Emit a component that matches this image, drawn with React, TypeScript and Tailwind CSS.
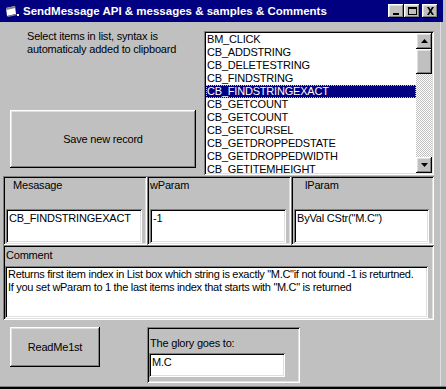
import React from "react";

const raised =
  "shadow-[inset_-1px_-1px_0_#000000,inset_1px_1px_0_#ffffff,inset_-2px_-2px_0_#808080,inset_2px_2px_0_#dfdfdf]";
const sunken =
  "shadow-[inset_1px_1px_0_#808080,inset_-1px_-1px_0_#ffffff,inset_2px_2px_0_#000000,inset_-2px_-2px_0_#dfdfdf]";
const frame =
  "shadow-[inset_1px_1px_0_#808080,inset_-1px_-1px_0_#ffffff,inset_2px_2px_0_#000000,inset_-2px_-2px_0_#dfdfdf]";

const messages = [
  "BM_CLICK",
  "CB_ADDSTRING",
  "CB_DELETESTRING",
  "CB_FINDSTRING",
  "CB_FINDSTRINGEXACT",
  "CB_GETCOUNT",
  "CB_GETCOUNT",
  "CB_GETCURSEL",
  "CB_GETDROPPEDSTATE",
  "CB_GETDROPPEDWIDTH",
  "CB_GETITEMHEIGHT",
];

function CaptionButton({ kind }: { kind: "min" | "max" | "close" }) {
  return (
    <div className={`w-[16px] h-[14px] bg-[#c0c0c0] flex items-center justify-center ${raised}`}>
      <svg width="9" height="8" viewBox="0 0 9 8">
        {kind === "min" && <rect x="1" y="6" width="6" height="2" fill="#000" />}
        {kind === "max" && (
          <>
            <rect x="0.5" y="0.5" width="8" height="7" fill="none" stroke="#000" strokeWidth="1" />
            <rect x="0" y="0" width="9" height="2" fill="#000" />
          </>
        )}
        {kind === "close" && (
          <path d="M1 0h2l1.5 2.5L6 0h2L5.5 4 8 8H6L4.5 5.5 3 8H1l2.5-4z" fill="#000" />
        )}
      </svg>
    </div>
  );
}

function TitleBar() {
  return (
    <div className="h-[22px] mr-[3px] bg-[#000080] flex items-center pl-[5px] pr-[5px]">
      {/* form icon */}
      <svg width="15" height="13" viewBox="0 0 15 13">
        <path d="M1 3l9-2 1 8-9 2z" fill="#ffffff" />
        <path d="M1 3l9-2 0.3 2-9 2z" fill="#808080" />
        <path d="M2 11l9-2 1 1-9 2z" fill="#808080" />
        <rect x="12" y="9" width="2" height="2" fill="#ffffff" />
      </svg>
      <span className="ml-[3px] text-white font-bold text-[11.5px] whitespace-nowrap">
        SendMessage API &amp; messages &amp; samples &amp; Comments
      </span>
      <div className="flex-1" />
      <CaptionButton kind="min" />
      <CaptionButton kind="max" />
      <div className="w-[2px]" />
      <CaptionButton kind="close" />
    </div>
  );
}

function ScrollButton({ up }: { up?: boolean }) {
  return (
    <div className={`h-[16px] bg-[#c0c0c0] flex items-center justify-center ${raised}`}>
      <svg width="7" height="4" viewBox="0 0 7 4">
        {up ? <path d="M3.5 0L7 4H0z" fill="#000" /> : <path d="M0 0h7L3.5 4z" fill="#000" />}
      </svg>
    </div>
  );
}

function TextBox({ value, className }: { value: string; className: string }) {
  return (
    <div className={`bg-white pl-[3px] pt-[3px] whitespace-nowrap ${sunken} ${className}`}>{value}</div>
  );
}

export default function App() {
  return (
    <div className="w-[446px] h-[389px] bg-[#c0c0c0] flex flex-col overflow-hidden font-['Liberation_Sans',Arial,sans-serif] text-[11px] leading-[13px] text-black">
      <TitleBar />
      <div className="flex flex-1 tracking-[-0.2px]">
        <div className="w-[434px] pl-[3px] flex flex-col">
          {/* list row */}
          <div className="flex h-[154px]">
            <div className="w-[201px] flex flex-col">
              <div className="mt-[8px] ml-[24px]">
                <div>Select items in list, syntax is</div>
                <div>automaticaly added to clipboard</div>
              </div>
              <button
                className={`mt-[54px] ml-[7px] w-[186px] h-[58px] bg-[#c0c0c0] flex items-center justify-center ${raised}`}
              >
                Save new record
              </button>
            </div>
            <div className={`mt-[9px] w-[230px] h-[144px] bg-white p-[2px] flex ${sunken}`}>
              <div className="flex-1 overflow-hidden">
                {messages.map((m, i) => (
                  <div
                    key={i}
                    className={
                      i === 4
                        ? "h-[13px] pl-[1px] whitespace-nowrap bg-[#000080] text-white outline-1 outline-dotted outline-[#c0c0c0] -outline-offset-1"
                        : "h-[13px] pl-[1px] whitespace-nowrap"
                    }
                  >
                    {m}
                  </div>
                ))}
              </div>
              <div className="w-[16px] flex flex-col">
                <ScrollButton up />
                <div className={`h-[25px] bg-[#c0c0c0] ${raised}`} />
                <div className="flex-1 bg-[image:repeating-conic-gradient(#ffffff_0_25%,#c0c0c0_0_50%)] bg-[length:2px_2px]" />
                <ScrollButton />
              </div>
            </div>
          </div>

          {/* parameter frames */}
          <div className="flex h-[69px]">
            <div className={`w-[144px] pt-[3px] flex flex-col ${frame}`}>
              <div className="pl-[10px]">Mesasage</div>
              <TextBox value="CB_FINDSTRINGEXACT" className="mt-[17px] ml-[3px] w-[136px] h-[34px]" />
            </div>
            <div className={`w-[144px] pt-[3px] flex flex-col ${frame}`}>
              <div className="pl-[3px]">wParam</div>
              <TextBox value="-1" className="mt-[17px] ml-[3px] w-[136px] h-[34px]" />
            </div>
            <div className={`w-[143px] pt-[3px] flex flex-col ${frame}`}>
              <div className="pl-[14px]">lParam</div>
              <TextBox value={'ByVal CStr("M.C")'} className="mt-[17px] ml-[3px] w-[135px] h-[34px]" />
            </div>
          </div>

          {/* comment */}
          <div className={`w-[431px] h-[75px] pt-[4px] flex flex-col ${frame}`}>
            <div className="pl-[3px]">Comment</div>
            <div className={`mt-[4px] ml-[2px] w-[423px] h-[52px] bg-white pl-[3px] pt-[2px] tracking-[-0.3px] ${sunken}`}>
              <div className="whitespace-nowrap">
                Returns first item index in List box which string is exactly "M.C"if not found -1 is returtned.
              </div>
              <div className="whitespace-nowrap">
                If you set wParam to 1 the last items index that starts with "M.C" is returned
              </div>
            </div>
          </div>

          {/* bottom row */}
          <div className="flex flex-1 pt-[7px]">
            <button
              className={`ml-[7px] w-[90px] h-[40px] bg-[#c0c0c0] flex items-center justify-center ${raised}`}
            >
              ReadMe1st
            </button>
            <div className={`ml-[47px] w-[153px] h-[56px] pt-[10px] flex flex-col ${frame}`}>
              <div className="pl-[3px]">The glory goes to:</div>
              <TextBox value="M.C" className="mt-[3px] ml-[2px] w-[136px] h-[24px]" />
            </div>
          </div>
        </div>
        <div className="w-[6px]" />
        <div className="w-px bg-[#dfdfdf]" />
      </div>
      <div className="h-[3px] bg-black border-t border-[#808080]" />
    </div>
  );
}
